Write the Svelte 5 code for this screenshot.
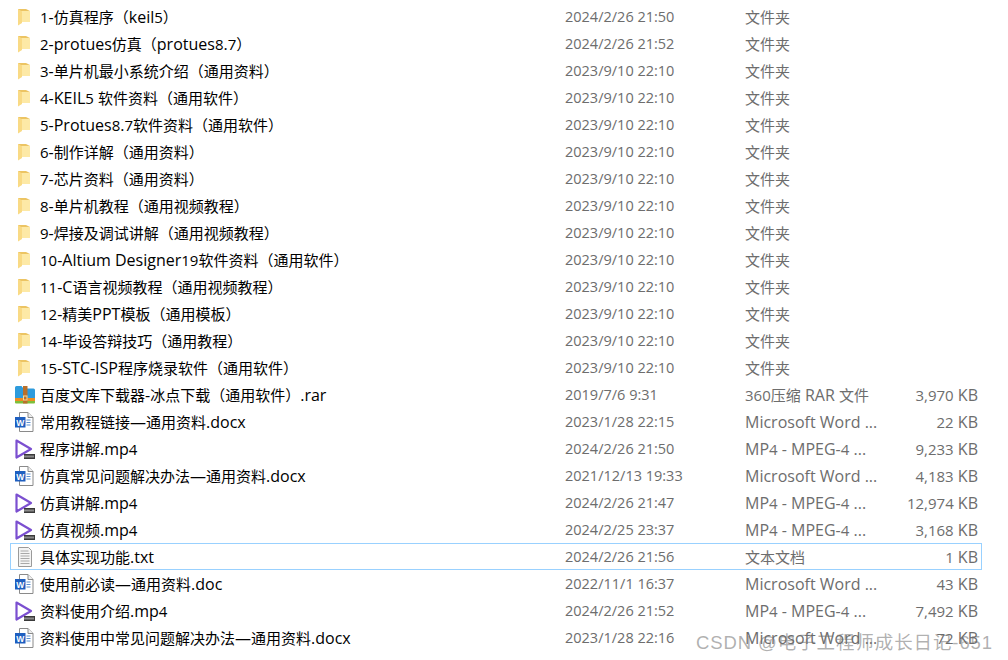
<script>
  const folder = (name, date) => ({ name, date, type: '文件夹', size: '', icon: 'folder' });
  const WORD = 'Microsoft Word ...';
  const MP4 = 'MP4 - MPEG-4 ...';

  const files = [
    folder('1-仿真程序（keil5）', '2024/2/26 21:50'),
    folder('2-protues仿真（protues8.7）', '2024/2/26 21:52'),
    folder('3-单片机最小系统介绍（通用资料）', '2023/9/10 22:10'),
    folder('4-KEIL5 软件资料（通用软件）', '2023/9/10 22:10'),
    folder('5-Protues8.7软件资料（通用软件）', '2023/9/10 22:10'),
    folder('6-制作详解（通用资料）', '2023/9/10 22:10'),
    folder('7-芯片资料（通用资料）', '2023/9/10 22:10'),
    folder('8-单片机教程（通用视频教程）', '2023/9/10 22:10'),
    folder('9-焊接及调试讲解（通用视频教程）', '2023/9/10 22:10'),
    folder('10-Altium Designer19软件资料（通用软件）', '2023/9/10 22:10'),
    folder('11-C语言视频教程（通用视频教程）', '2023/9/10 22:10'),
    folder('12-精美PPT模板（通用模板）', '2023/9/10 22:10'),
    folder('14-毕设答辩技巧（通用教程）', '2023/9/10 22:10'),
    folder('15-STC-ISP程序烧录软件（通用软件）', '2023/9/10 22:10'),
    { name: '百度文库下载器-冰点下载（通用软件）.rar', date: '2019/7/6 9:31', type: '360压缩 RAR 文件', size: '3,970 KB', icon: 'rar' },
    { name: '常用教程链接—通用资料.docx', date: '2023/1/28 22:15', type: WORD, size: '22 KB', icon: 'word' },
    { name: '程序讲解.mp4', date: '2024/2/26 21:50', type: MP4, size: '9,233 KB', icon: 'video' },
    { name: '仿真常见问题解决办法—通用资料.docx', date: '2021/12/13 19:33', type: WORD, size: '4,183 KB', icon: 'word' },
    { name: '仿真讲解.mp4', date: '2024/2/26 21:47', type: MP4, size: '12,974 KB', icon: 'video' },
    { name: '仿真视频.mp4', date: '2024/2/25 23:37', type: MP4, size: '3,168 KB', icon: 'video' },
    { name: '具体实现功能.txt', date: '2024/2/26 21:56', type: '文本文档', size: '1 KB', icon: 'txt', selected: true },
    { name: '使用前必读—通用资料.doc', date: '2022/11/1 16:37', type: WORD, size: '43 KB', icon: 'word' },
    { name: '资料使用介绍.mp4', date: '2024/2/26 21:52', type: MP4, size: '7,492 KB', icon: 'video' },
    { name: '资料使用中常见问题解决办法—通用资料.docx', date: '2023/1/28 22:16', type: WORD, size: '72 KB', icon: 'word' }
  ];

  // letters run wider than digits and CJK in the reference's UI font
  const runs = (text) => text.match(/[A-Za-z .—-]+|[^A-Za-z .—-]+/g);
  const isLatin = (run) => /^[A-Za-z .—-]/.test(run);
</script>

{#snippet label(text)}
  {#each runs(text) as run}<span class:latin={isLatin(run)}>{run}</span>{/each}
{/snippet}

<div class="list">
  {#each files as f}
    <div class="row" class:selected={f.selected}>
      <span class="icon">
        {#if f.icon === 'folder'}
          <svg width="20" height="20" viewBox="0 0 20 20">
            <path d="M3 2h8l4 2v11H6z" fill="#ecc463" />
            <path d="M6 4h9v11H6z" fill="#fde9a6" />
            <path d="M3 2l4 2.500V16l-4 2.500z" fill="#f9da85" />
          </svg>
        {:else if f.icon === 'rar'}
          <svg width="20" height="20" viewBox="0 0 20 20">
            <path d="M0 2.500a1.500 1.500 0 0 1 1.500-1.500h5L8.500 3.500H18.500a1.500 1.500 0 0 1 1.500 1.500V13H0z" fill="#2e9bdc" />
            <path d="M0 13h20v3H0z" fill="#f08c1e" />
            <path d="M0 16h20v1.500a1 1 0 0 1-1 1H1a1 1 0 0 1-1-1z" fill="#7cbf3c" />
            <rect x="8" y="1" width="4.500" height="17.500" fill="#b9702a" />
            <rect x="8.500" y="11" width="3.500" height="4" fill="none" stroke="#f5d9a0" stroke-width="1" />
          </svg>
        {:else if f.icon === 'word'}
          <svg width="20" height="20" viewBox="0 0 20 20">
            <path d="M4.500 .5h8.500l5 5v14H4.500z" fill="#fff" stroke="#8a8a8a" />
            <path d="M13 .5v5h5" fill="#eee" stroke="#8a8a8a" />
            <path d="M11.500 8h4M11.500 10.500h4M11.500 13h4" stroke="#5b8fd0" stroke-width="1" />
            <rect x="0" y="5" width="10.500" height="10.500" fill="#1e5fc0" />
            <text class="w" x="5.250" y="13.700" text-anchor="middle">W</text>
          </svg>
        {:else if f.icon === 'video'}
          <svg width="20" height="20" viewBox="0 0 20 20">
            <path d="M1.500 1.500l14.500 8.500L1.500 18.500z" fill="none" stroke="#7b4fd0" stroke-width="2.200" stroke-linejoin="round" />
            <rect x="9" y="15" width="11" height="5" fill="#3a3a3a" />
            <path d="M10 16.500v2M12 16.500v2M14 16.500v2M16 16.500v2M18 16.500v2" stroke="#ddd" stroke-width="1" />
          </svg>
        {:else}
          <svg width="20" height="20" viewBox="0 0 20 20">
            <path d="M3.500 .5h10l3 3v16h-13z" fill="#f4f4f4" stroke="#9a9a9a" />
            <path d="M5.500 4h8M5.500 6.500h9M5.500 9h9M5.500 11.500h9M5.500 14h9M5.500 16.500h9" stroke="#a8a8a8" stroke-width="1" />
          </svg>
        {/if}
      </span>
      <span class="name">{@render label(f.name)}</span>
      <span class="date">{f.date}</span>
      <span class="type">{@render label(f.type)}</span>
      <span class="size">{@render label(f.size)}</span>
    </div>
  {/each}
  <div class="mark">CSDN @电子工程师成长日记-651</div>
</div>

<style>
  :global(body) {
    background: #fff;
  }

  .list {
    position: relative;
    height: 660px;
    overflow: hidden;
    box-sizing: border-box;
    padding: 3px 26px 0 10px;
    font-family: "Open Sans", "Noto Sans CJK SC", sans-serif;
    font-size: 15px;
  }

  .row {
    display: grid;
    grid-template-columns: 30px 525px 180px 120px 117px;
    align-items: center;
    height: 27px;
    box-sizing: border-box;
    color: #6d6d6d;
    white-space: nowrap;
  }

  .row.selected {
    box-shadow: inset 0 0 0 1px #99d1ff;
  }

  .icon {
    display: flex;
    padding-left: 5px;
  }

  .icon svg {
    display: block;
  }

  .w {
    font-family: "Liberation Sans", sans-serif;
    font-size: 8.500px;
    font-weight: 700;
    fill: #fff;
  }

  .name {
    color: #000;
  }

  .latin {
    font-size: 16px;
  }

  .date {
    font-size: 14.500px;
  }

  .size {
    text-align: right;
    padding-right: 4px;
  }

  .mark {
    position: absolute;
    right: 15px;
    bottom: 6px;
    color: rgba(110, 110, 110, 0.55);
    font-family: "Liberation Sans", "Noto Sans CJK SC", sans-serif;
    font-size: 18.500px;
    letter-spacing: 0.900px;
  }
</style>
